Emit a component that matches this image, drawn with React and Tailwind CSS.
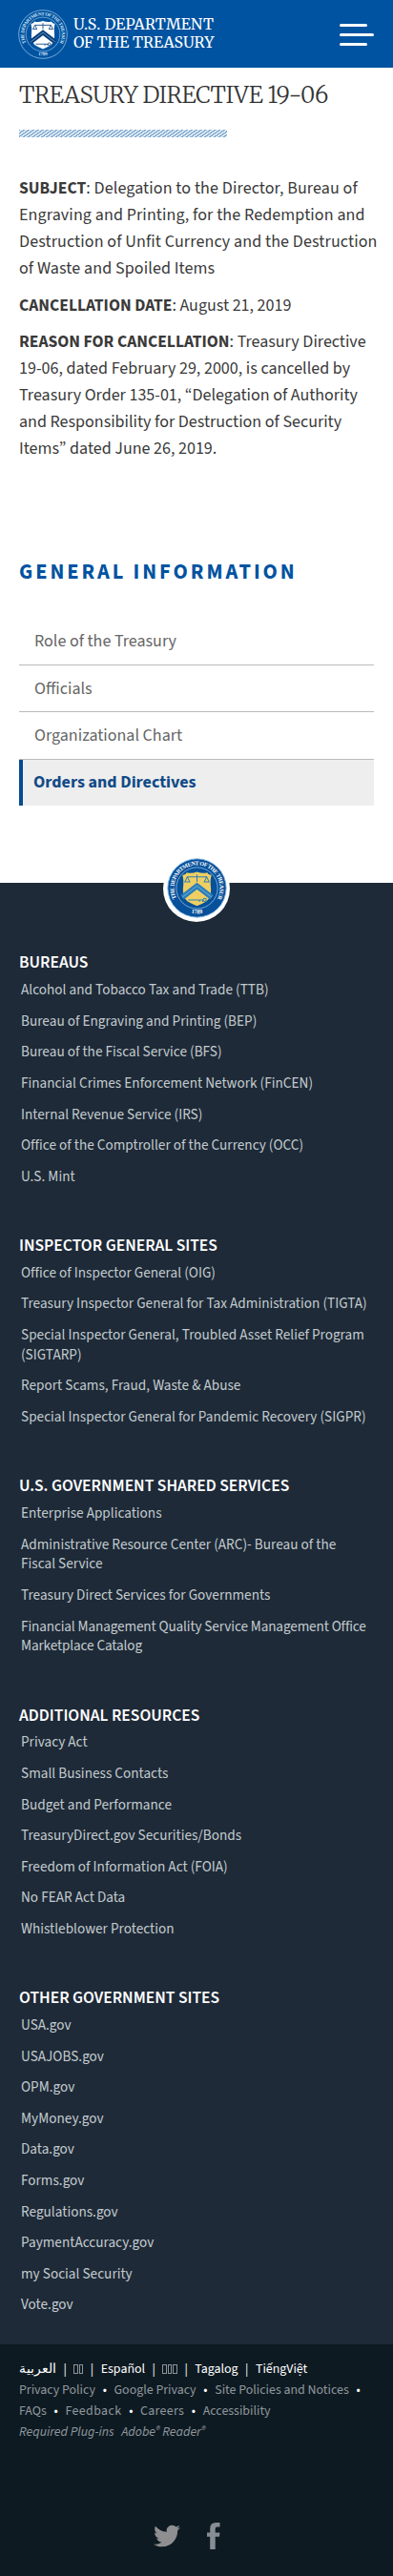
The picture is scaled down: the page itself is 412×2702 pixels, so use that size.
import React from "react";
import { FaTwitter } from "react-icons/fa";

const LINK_GROUPS = [
  {
    title: "BUREAUS",
    links: [
      "Alcohol and Tobacco Tax and Trade (TTB)",
      "Bureau of Engraving and Printing (BEP)",
      "Bureau of the Fiscal Service (BFS)",
      "Financial Crimes Enforcement Network (FinCEN)",
      "Internal Revenue Service (IRS)",
      "Office of the Comptroller of the Currency (OCC)",
      "U.S. Mint",
    ],
  },
  {
    title: "INSPECTOR GENERAL SITES",
    links: [
      "Office of Inspector General (OIG)",
      "Treasury Inspector General for Tax Administration (TIGTA)",
      "Special Inspector General, Troubled Asset Relief Program\n(SIGTARP)",
      "Report Scams, Fraud, Waste & Abuse",
      "Special Inspector General for Pandemic Recovery (SIGPR)",
    ],
  },
  {
    title: "U.S. GOVERNMENT SHARED SERVICES",
    links: [
      "Enterprise Applications",
      "Administrative Resource Center (ARC)- Bureau of the\nFiscal Service",
      "Treasury Direct Services for Governments",
      "Financial Management Quality Service Management Office\nMarketplace Catalog",
    ],
  },
  {
    title: "ADDITIONAL RESOURCES",
    links: [
      "Privacy Act",
      "Small Business Contacts",
      "Budget and Performance",
      "TreasuryDirect.gov Securities/Bonds",
      "Freedom of Information Act (FOIA)",
      "No FEAR Act Data",
      "Whistleblower Protection",
    ],
  },
  {
    title: "OTHER GOVERNMENT SITES",
    links: [
      "USA.gov",
      "USAJOBS.gov",
      "OPM.gov",
      "MyMoney.gov",
      "Data.gov",
      "Forms.gov",
      "Regulations.gov",
      "PaymentAccuracy.gov",
      "my Social Security",
      "Vote.gov",
    ],
  },
];

function Seal({ id, className, ring, line, shield, mark, text }) {
  return (
    <svg viewBox="0 0 62 62" className={className}>
      <defs>
        <path id={id + "-top"} d="M 9.9 41.5 A 23.6 23.6 0 1 1 52.1 41.5" />
        <path id={id + "-bottom"} d="M 17 53.6 A 26.6 26.6 0 0 0 45 53.6" />
      </defs>
      <circle cx="31" cy="31" r="30.2" fill={ring} stroke={line} strokeWidth="0.9" />
      <circle cx="31" cy="31" r="21.3" fill={ring} stroke={line} strokeWidth="0.8" />
      <text fill={text} fontSize="6" fontWeight="700" fontFamily="Liberation Serif, serif">
        <textPath href={"#" + id + "-top"} textLength="100">THE DEPARTMENT OF THE TREASURY</textPath>
      </text>
      <text fill={text} fontSize="6" fontWeight="700" fontFamily="Liberation Serif, serif">
        <textPath href={"#" + id + "-bottom"} startOffset="50%" textAnchor="middle">1789</textPath>
      </text>
      <path
        d="M16 17.5 q3 .4 4.4 -2.6 q4.6 1.6 10.6 -.6 q6 2.2 10.6 .6 q1.4 3 4.4 2.6 q-1.8 6 -.6 14 q.5 8.5 -4.4 13 q-4.5 2.8 -10 5 q-5.5 -2.2 -10 -5 q-4.9 -4.5 -4.4 -13 q1.2 -8 -.6 -14z"
        fill={shield}
      />
      <path d="M15.8 40.5 L31 28.8 L46.2 40.5" fill="none" stroke={mark} strokeWidth="5.6" />
      <path d="M15.8 40.5 L31 28.8 L46.2 40.5" fill="none" stroke={line} strokeWidth="0.7" />
      <g fill="none" stroke={mark} strokeWidth="1">
        <path d="M21 19.5 H41 M31 17 V24.5 M18.5 24.5 L21 19.5 L23.5 24.5z M38.5 24.5 L41 19.5 L43.5 24.5z" />
        <path d="M22 43.2 h15 m-3.5 0 v2 m3.5 -2 v2" />
        <circle cx="39" cy="43.2" r="1.6" />
      </g>
    </svg>
  );
}

function Header() {
  return (
    <header className="flex h-[71px] items-center justify-between bg-[#0053a1] pt-px pr-5 pl-[19px]">
      <div className="flex items-center gap-1.5">
        <Seal id="head" className="size-[52px]" ring="#0053a1" line="#9cc4e8" shield="#ffffff" mark="#0b3f7c" text="#d5e6f6" />
        <div className="pb-0.5 font-[Merriweather,'Noto_Serif','Liberation_Serif',serif] text-[15.8px] leading-[18.6px] whitespace-nowrap text-white">
          <div className="tracking-[0.2px]">U.S. DEPARTMENT</div>
          <div>OF THE TREASURY</div>
        </div>
      </div>
      <button className="mt-px flex w-9 flex-col gap-[7px]" aria-label="Menu">
        <span className="h-[3px] w-[29px] rounded-full bg-white" />
        <span className="h-[3px] w-9 rounded-full bg-white" />
        <span className="h-[3px] w-[29px] rounded-full bg-white" />
      </button>
    </header>
  );
}

function Article() {
  return (
    <main className="px-5">
      <h1 className="h-[65px] pt-[13.5px] font-[Merriweather,'Noto_Serif','Liberation_Serif',serif] text-2xl leading-[30px] font-light tracking-[-0.42px] whitespace-nowrap text-[#333]">
        TREASURY DIRECTIVE 19-06
      </h1>
      <div className="h-2 w-[218px] bg-[repeating-linear-gradient(145deg,#82aace_0px,#82aace_1px,#e8f2f9_1.4px,#e8f2f9_2.4px,#82aace_2.8px)]" />
      <div className="mt-10 flex flex-col gap-2.5 text-[18px] leading-[28.16px] text-[#3a3a3a]">
        <p className="-mr-2 tracking-[0.11px]"><b className="text-[17.6px] tracking-normal">SUBJECT</b>: Delegation to the Director, Bureau of Engraving and Printing, for the Redemption and Destruction of Unfit Currency and the Destruction of Waste and Spoiled Items</p>
        <p><b className="text-[17.6px]">CANCELLATION DATE</b>: August 21, 2019</p>
        <p><b className="text-[17.6px]">REASON FOR CANCELLATION</b>: Treasury Directive 19-06, dated February 29, 2000, is cancelled by Treasury Order 135-01, “Delegation of Authority and Responsibility for Destruction of Security Items” dated June 26, 2019.</p>
      </div>
    </main>
  );
}

function SideMenu() {
  return (
    <nav className="mt-[99px] px-5">
      <h2 className="text-[22.4px] leading-[30px] font-bold tracking-[2.93px] whitespace-nowrap text-[#0053a1]">GENERAL INFORMATION</h2>
      <ul className="mt-[34px] text-[18px] text-[#666]">
        <li className="flex h-[49.4px] items-center border-b border-[#b9bbbd] pl-4">Role of the Treasury</li>
        <li className="flex h-[49.4px] items-center border-b border-[#b9bbbd] pl-4">Officials</li>
        <li className="flex h-[49.4px] items-center border-b border-[#b9bbbd] pl-4">Organizational Chart</li>
        <li className="flex h-12 items-center border-l-4 border-[#064b92] bg-[#eee] pl-[11px] font-bold text-[#124a86]">Orders and Directives</li>
      </ul>
    </nav>
  );
}

function FooterGroup({ title, links }) {
  return (
    <section className="mb-[50.4px]">
      <h3 className="mb-[5.9px] text-[17.6px] leading-6 font-semibold text-white">{title}</h3>
      <ul className="flex flex-col gap-[11.8px] pl-0.5 text-[15.2px] leading-[20.8px] whitespace-pre text-[#c3cace]">
        {links.map((link) => (
          <li key={link} className={link.startsWith("Financial Management") ? "tracking-[-0.12px]" : "tracking-[0.02px]"}>{link}</li>
        ))}
      </ul>
    </section>
  );
}

function Dot() {
  return <span className="mx-[7.7px] text-white">•</span>;
}

function Bar() {
  return <span className="mx-[7.5px]">|</span>;
}

function Tofu({ count }) {
  return (
    <span className="inline-flex gap-px align-[-1px]">
      {Array.from({ length: count }, (_, i) => (
        <span key={i} className="h-2.5 w-[4.5px] border border-[#8b9398]" />
      ))}
    </span>
  );
}

function Legal() {
  return (
    <div className="h-[243px] bg-[#0e1a22] px-5 pt-[15.7px] text-[13.9px] leading-[22px] whitespace-nowrap text-[#8e979c]">
      <div className="h-[22px] text-white">
        العربية<Bar /><Tofu count={2} /><Bar />Español<Bar /><Tofu count={3} /><Bar />Tagalog<Bar />TiếngViệt
      </div>
      <div>Privacy Policy<Dot />Google Privacy<Dot />Site Policies and Notices<Dot /></div>
      <div>FAQs<Dot /><span className="tracking-[0.4px]">Feedback</span><Dot /><span className="tracking-[0.3px]">Careers</span><Dot />Accessibility</div>
      <div className="h-[22px] italic">
        Required Plug-ins&nbsp; <span className="ml-0.5">Adobe<span className="align-[2px] text-[11px] leading-none">®</span> Reader<span className="align-[2px] text-[11px] leading-none">®</span></span>
      </div>
      <div className="mt-[84px] flex items-center pl-[141px]">
        <FaTwitter className="size-7 text-[#8f8f91]" />
        <svg viewBox="0 0 14 28" className="ml-7 h-7 w-3.5" fill="#868e94">
          <path d="M3.2 28 V14.8 H0 V10.4 H3.2 V6.4 Q3.2 0 9.5 0 H13.5 V4.6 H10.5 Q8.7 4.6 8.7 6.4 V10.4 H13.5 L13 14.8 H8.7 V28z" />
        </svg>
      </div>
    </div>
  );
}

export default function App() {
  return (
    <div className="w-[412px] bg-white font-['Source_Sans_3','Noto_Sans_CJK_SC','Noto_Sans',sans-serif]">
      <Header />
      <Article />
      <SideMenu />
      <footer className="mt-[81px] bg-[#1e2a38]">
        <div className="flex h-[70px] justify-center">
          <div className="-mt-[29px] flex size-[70px] items-center justify-center rounded-full bg-white">
            <Seal id="foot" className="size-[63px]" ring="#07509a" line="#8fc0e6" shield="#f0cf62" mark="#2b7fb8" text="#ffffff" />
          </div>
        </div>
        <div className="h-[1463px] px-5 pt-[2.5px]">
          {LINK_GROUPS.map((group) => (
            <FooterGroup key={group.title} {...group} />
          ))}
        </div>
        <Legal />
      </footer>
    </div>
  );
}
